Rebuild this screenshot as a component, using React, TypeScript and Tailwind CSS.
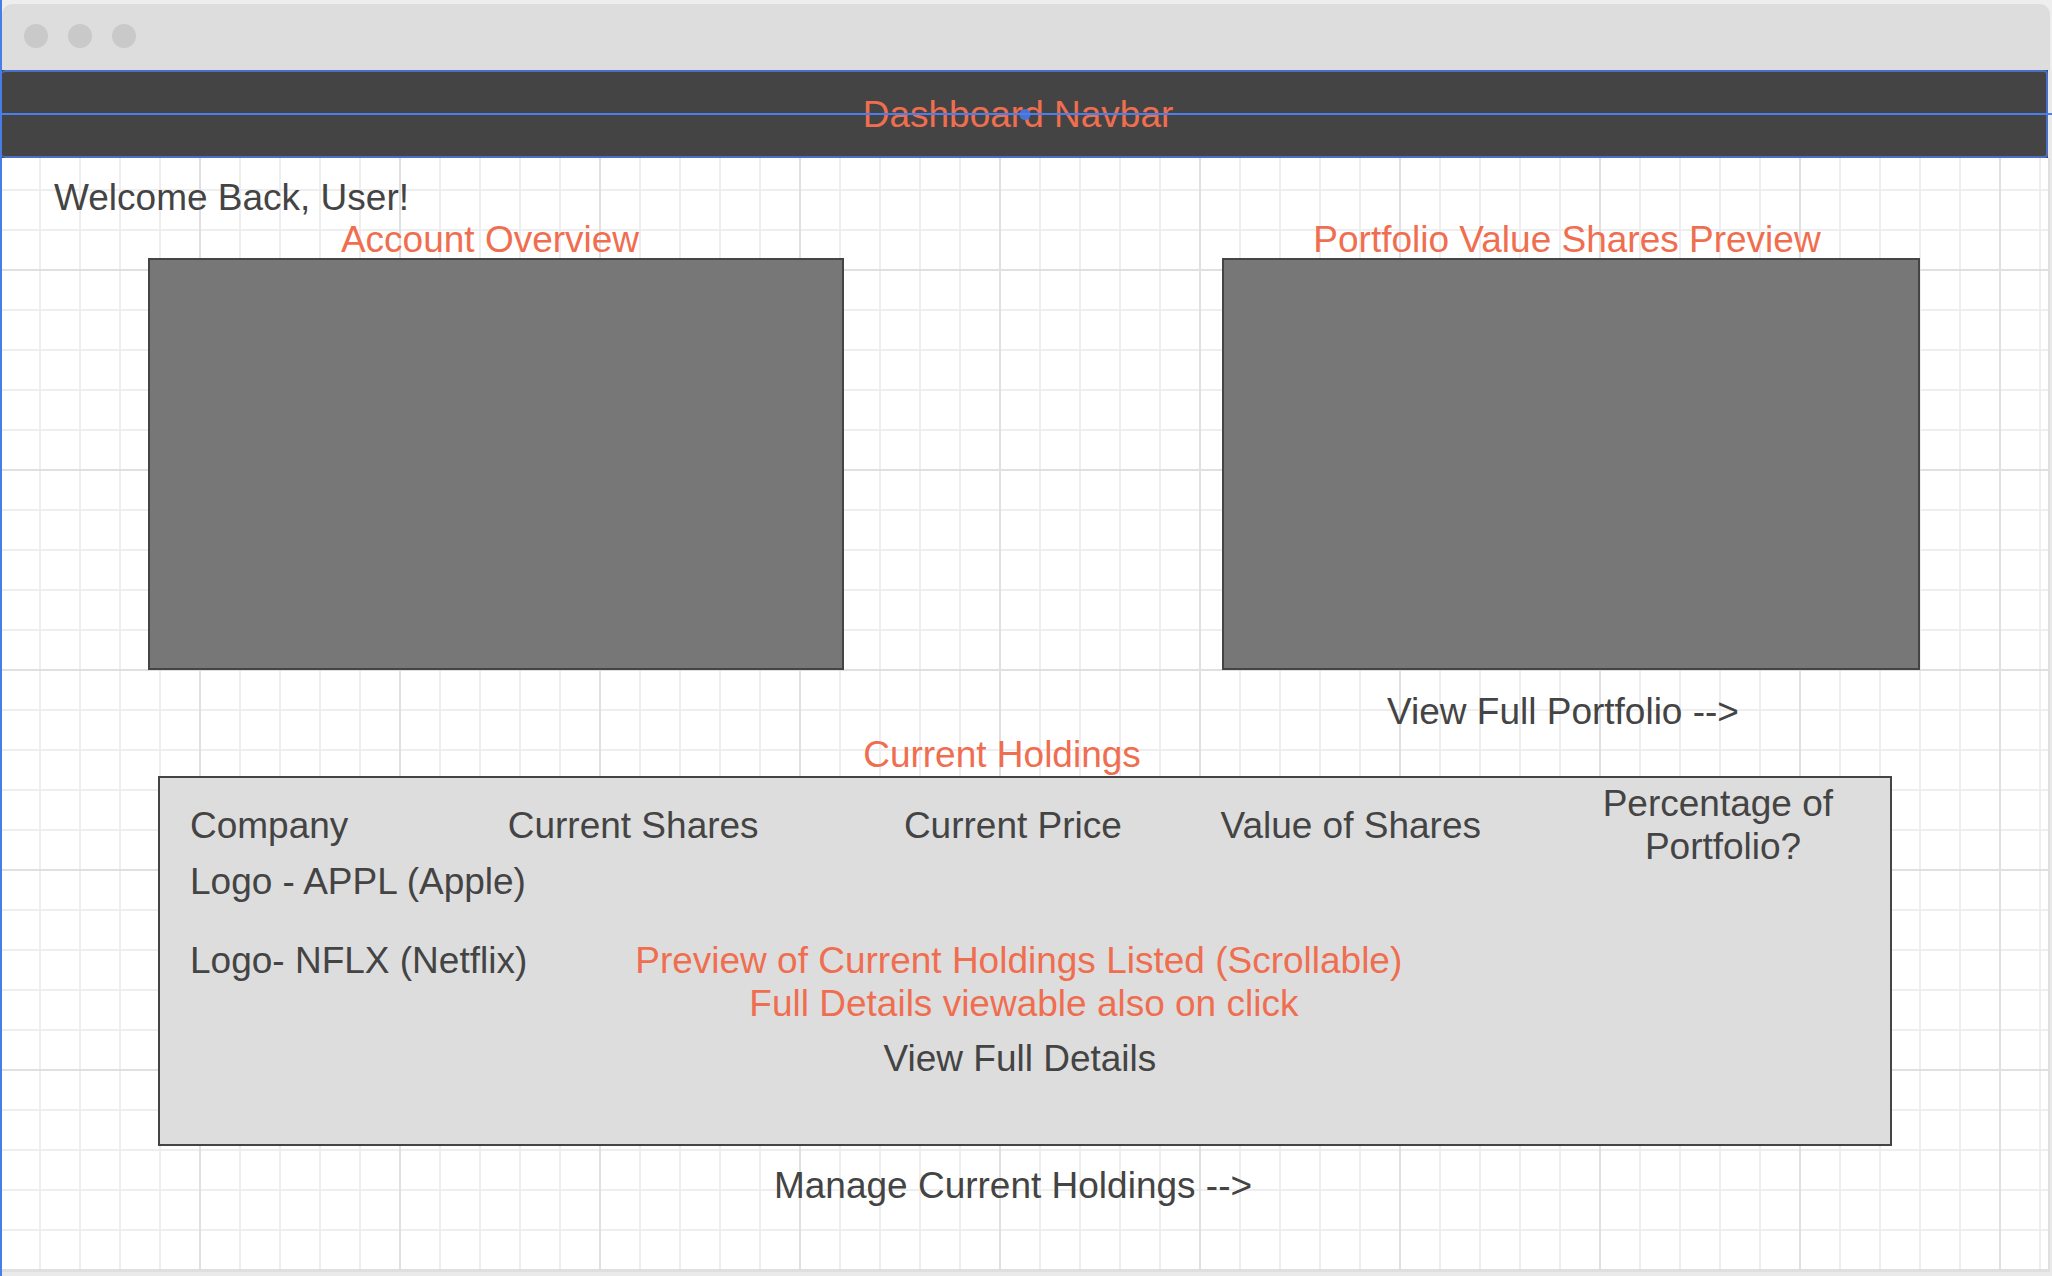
const canvasGrid =
  "bg-[repeating-linear-gradient(90deg,#e0e0e0_0_2px,transparent_2px_200px),repeating-linear-gradient(180deg,#e0e0e0_0_2px,transparent_2px_200px),repeating-linear-gradient(90deg,#eeeeee_0_2px,transparent_2px_40px),repeating-linear-gradient(180deg,#eeeeee_0_2px,transparent_2px_40px)] bg-[position:-3px_0,0_-89px,-3px_0,0_-9px] bg-[size:200px_100%,100%_200px,40px_100%,100%_40px]";

function TitleBar() {
  return (
    <header className="bg-[#eeeeee] pt-1">
      <div className="mr-0.5 flex h-[66px] items-start gap-5 rounded-t-[10px] bg-[#dddddd] px-[22px] pt-5">
        <span className="size-6 rounded-full bg-[#c9c9c9]" />
        <span className="size-6 rounded-full bg-[#c9c9c9]" />
        <span className="size-6 rounded-full bg-[#c9c9c9]" />
      </div>
    </header>
  );
}

function Navbar() {
  return (
    <nav className="relative">
      <div className="relative mr-1 h-[88px] bg-[#444444]">
        <div className="flex h-full w-full items-center justify-center rounded-[4px] border-2 border-l-0 border-[#4a6fc9] pr-3">
          <span className="text-[#f06e50]">Dashboard Navbar</span>
        </div>
        <div className="absolute top-[39px] left-1/2 size-[11px] -translate-x-1/2 rounded-full bg-[#4a72d4]" />
      </div>
      <div className="absolute inset-x-0 top-[43px] h-0.5 bg-[#4c7fee]" />
    </nav>
  );
}

function Holdings() {
  return (
    <section className="mx-[156px]">
      <h2 className="pr-[46px] text-center text-[#f06e50]">Current Holdings</h2>
      <div className="border-2 border-[#444444] bg-[#dddddd] pt-1 pb-16">
        <table className="w-full table-fixed text-left whitespace-nowrap">
          <colgroup>
            <col className="w-[20.1%]" />
            <col className="w-[22.9%]" />
            <col className="w-[18.3%]" />
            <col className="w-[19.4%]" />
            <col className="w-[19.3%]" />
          </colgroup>
          <thead>
            <tr>
              <th className="pl-[30px] font-normal">Company</th>
              <th className="font-normal">Current Shares</th>
              <th className="font-normal">Current Price</th>
              <th className="font-normal">Value of Shares</th>
              <th className="text-center font-normal">
                Percentage of&nbsp;
                <br />
                Portfolio?
              </th>
            </tr>
          </thead>
          <tbody>
            <tr>
              <td className="pl-[30px] leading-[27px]">Logo - APPL (Apple)</td>
            </tr>
            <tr className="align-top">
              <td className="pt-11 pl-[30px]">Logo- NFLX (Netflix)</td>
              <td colSpan={3} className="pt-11 pr-4 text-center">
                <p className="text-[#f06e50]">
                  Preview of Current Holdings Listed (Scrollable)&nbsp;
                  <br />
                  Full Details viewable also on click
                </p>
                <button type="button" className="mt-3 block w-full pr-2">
                  View Full Details
                </button>
              </td>
            </tr>
          </tbody>
        </table>
      </div>
      <a href="#manage" className="mt-[18px] block pr-6 text-center">
        Manage Current Holdings --&gt;
      </a>
    </section>
  );
}

export default function App() {
  return (
    <div className="flex min-h-screen flex-col border-l-2 border-[#4a7ce8] bg-[#eaeaea] font-['Liberation_Sans',Arial,sans-serif] text-[37px] leading-[43px] text-[#444444]">
      <TitleBar />
      <Navbar />
      <main className="mr-0.5 mb-1 flex grow flex-col border-r-2 border-b-[3px] border-[#dfdfdf] bg-white">
        <div className={`grow pt-[18px] ${canvasGrid}`}>
          <h1 className="pl-[52px]">Welcome Back, User!</h1>
          <div className="mr-32 ml-[146px] grid grid-cols-[696fr_378fr_698fr]">
            <section>
              <h2 className="pt-[3px] pr-3 text-center leading-9 text-[#f06e50]">Account Overview</h2>
              <div className="h-[412px] border-2 border-[#444444] bg-[#777777]" />
            </section>
            <section className="col-start-3">
              <h2 className="pt-[3px] pr-2 text-center leading-9 text-[#f06e50]">
                Portfolio Value Shares Preview
              </h2>
              <div className="h-[412px] border-2 border-[#444444] bg-[#777777]" />
              <a href="#portfolio" className="mt-5 block pr-4 text-center">
                View Full Portfolio --&gt;
              </a>
            </section>
          </div>
          <Holdings />
        </div>
      </main>
    </div>
  );
}
